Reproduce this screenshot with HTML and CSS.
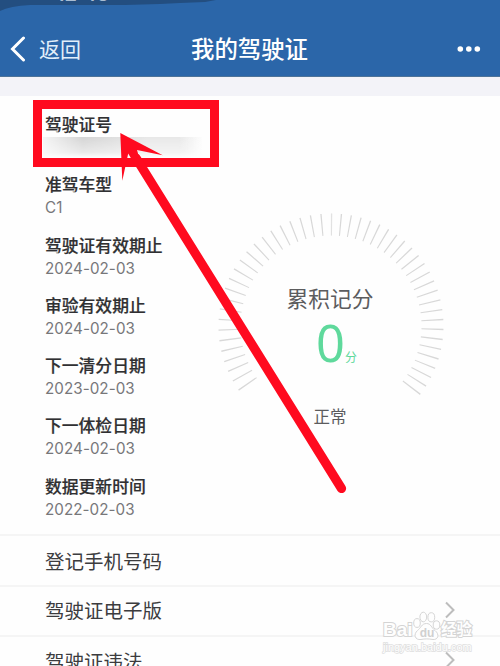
FILE: index.html
```html
<!DOCTYPE html>
<html lang="zh-CN">

<head>
  <meta charset="UTF-8">
  <title>我的驾驶证</title>
  <link rel="stylesheet" href="styles.css">
</head>

<body>
  <header class="header">
    <svg class="status-shade" width="500" height="14" viewBox="0 0 500 14">
      <path d="M0 0H216L205 2L180 3L160 4L125 5L30 5Q10 6 0 11Z" />
    </svg>
    <div class="status"><span class="clock">12:48</span></div>
    <div class="navbar">
      <a class="back">
        <svg width="16" height="26" viewBox="0 0 16 26">
          <path d="M13.5 2L2.5 13L13.5 24" />
        </svg>
        <span>返回</span>
      </a>
      <h1>我的驾驶证</h1>
      <svg class="more" width="24" height="8" viewBox="0 0 24 8">
        <circle cx="3.3" cy="4" r="2.8" />
        <circle cx="11.8" cy="4" r="2.8" />
        <circle cx="20.3" cy="4" r="2.8" />
      </svg>
    </div>
  </header>

  <main>
    <section class="card">
      <dl class="info">
        <div class="item">
          <dt>驾驶证号</dt>
          <dd class="hidden-value"></dd>
        </div>
        <div class="item">
          <dt>准驾车型</dt>
          <dd>C1</dd>
        </div>
        <div class="item">
          <dt>驾驶证有效期止</dt>
          <dd>2024-02-03</dd>
        </div>
        <div class="item">
          <dt>审验有效期止</dt>
          <dd>2024-02-03</dd>
        </div>
        <div class="item">
          <dt>下一清分日期</dt>
          <dd>2023-02-03</dd>
        </div>
        <div class="item">
          <dt>下一体检日期</dt>
          <dd>2024-02-03</dd>
        </div>
        <div class="item">
          <dt>数据更新时间</dt>
          <dd>2022-02-03</dd>
        </div>
      </dl>

      <div class="gauge">
        <svg class="ticks" width="228" height="228" viewBox="-114 -114 228 228">
          <path class="left" d="M0.5 -101.5A101.5 101.5 0 0 0 -80 62.5" />
          <path class="right" d="M0.5 -101.5A101.5 101.5 0 0 1 77.8 65.2" />
        </svg>
        <div class="score">
          <p class="score-title">累积记分</p>
          <p class="score-value">0<small>分</small></p>
          <p class="score-state">正常</p>
        </div>
      </div>
    </section>

    <ul class="menu">
      <li>登记手机号码</li>
      <li>驾驶证电子版
        <svg width="12" height="18" viewBox="0 0 12 18"><path d="M2 1.5L9.5 9L2 16.5" /></svg>
      </li>
      <li>驾驶证违法
        <svg width="12" height="18" viewBox="0 0 12 18"><path d="M2 1.5L9.5 9L2 16.5" /></svg>
      </li>
    </ul>
  </main>

  <!-- 红框和箭头 -->
  <div class="mark"></div>
  <svg class="arrow" width="500" height="666" viewBox="0 0 500 666">
    <path class="shaft" d="M136 158L341.5 488.5" />
    <path class="head" d="M120.3 133L162.7 155.3L137 150L139 157L132 160L128.2 153.5L122.3 180.7Z" />
  </svg>

  <div class="watermark">
    <div class="brand">
      <span class="bai">Bai</span>
      <svg width="28" height="30" viewBox="0 0 28 30">
        <ellipse cx="4" cy="12" rx="3.3" ry="4.4" />
        <ellipse cx="10.3" cy="6" rx="3.4" ry="4.8" />
        <ellipse cx="18.3" cy="6.3" rx="3.4" ry="4.6" />
        <ellipse cx="23.5" cy="14" rx="3.3" ry="4.2" />
        <path d="M13.5 12.5C18 12.5 18.5 17 22 19.5C27 23.5 25 29 20 28.5C15 27.7 12 27.7 8 28.5C2 29.3 0 23.5 4.5 19.5C8 17 8.5 12.5 13.5 12.5Z" />
        <text x="14" y="26" text-anchor="middle">du</text>
      </svg>
      <span class="jingyan">经验</span>
    </div>
    <div class="site">jingyan.baidu.com</div>
  </div>
</body>

</html>
```

FILE: styles.css
```css
* {
  box-sizing: border-box;
}

body {
  margin: 0;
  height: 666px;
  position: relative;
  overflow: hidden;
  background-color: #fefefe;
  font-family: Inter, "Noto Sans CJK SC", sans-serif;
  color: #3c3c3e;
}

h1, p, dl, dd, ul {
  margin: 0;
  padding: 0;
}

.header {
  position: relative;
  height: 77px;
  background-color: #2b66a9;
  border-bottom: 1px solid #4d7399;
}

.status-shade {
  position: absolute;
  top: 0;
  left: 0;
  fill: #234e80;
}

.status {
  position: relative;
  height: 21px;
  padding-left: 56px;
}

.clock {
  display: flex;
  align-items: flex-end;
  height: 0;
  font-size: 20px;
  font-weight: 600;
  line-height: 12px;
  color: #a9bdd3;
}

.navbar {
  display: grid;
  grid-template-columns: 1fr auto 1fr;
  align-items: center;
  height: 56px;
  padding: 0 19px 0 10px;
  color: #fff;
}

.back {
  display: flex;
  align-items: center;
  gap: 13px;
  font-size: 21px;
  line-height: 28px;
  color: #e2effa;
}

.back span {
  padding-top: 1px;
}

.back path {
  fill: none;
  stroke: #fff;
  stroke-width: 3;
  stroke-linecap: round;
}

h1 {
  padding: 1px 0 0 8px;
  font-size: 23.4px;
  font-weight: 500;
  line-height: 32px;
}

.more {
  justify-self: end;
  fill: #fff;
}

main {
  padding-top: 19px;
  background: linear-gradient(#f3f3f8 19px, #fefefe 19px);
}

.card {
  display: flex;
  height: 438px;
  padding: 17px 57px 0 45px;
}

.info {
  width: 172px;
  flex: none;
}

.item {
  height: 60.3px;
}

dt {
  font-size: 16.8px;
  font-weight: 500;
  line-height: 24px;
  color: #303032;
  -webkit-text-stroke: 0.2px #303032;
}

dd {
  font-size: 15.2px;
  line-height: 21px;
  letter-spacing: 0.05px;
  color: #77777a;
}

.hidden-value {
  width: 160px;
  height: 21px;
  margin-left: -2px;
  background: linear-gradient(90deg, #f4f4f4, #d4d4d4 25%, #dedede 45%, #e8e8e8 65%, #e8e8e8 85%, #fefefe00);
  -webkit-mask-image: linear-gradient(#000, #0008 70%, transparent);
  mask-image: linear-gradient(#000, #0008 70%, transparent);
}

.gauge {
  display: grid;
  width: 228px;
  height: 228px;
  margin-top: 99px;
  flex: none;
}

.ticks,
.score {
  grid-area: 1 / 1;
}

.ticks path {
  fill: none;
  stroke: #d8d8d8;
  stroke-width: 22;
  stroke-dashoffset: 0.6;
}

.ticks .left {
  stroke-dasharray: 1.2 8.42;
}

.ticks .right {
  stroke-dasharray: 1.2 7.8;
}

.score {
  padding: 71px 2px 0 0;
  text-align: center;
  color: #5c5c5e;
}

.score-title {
  font-size: 21.7px;
  line-height: 32px;
}

.score-value {
  display: flex;
  justify-content: center;
  align-items: baseline;
  padding-left: 13px;
  font-family: "Noto Sans", "Noto Sans CJK SC", sans-serif;
  font-size: 50.5px;
  line-height: 56px;
  color: #5fd99c;
}

.score-value small {
  width: 12px;
  font-size: 12px;
}

.score-state {
  padding-top: 16px;
  font-size: 16.5px;
  line-height: 30px;
}

.menu {
  list-style: none;
}

.menu li {
  display: flex;
  justify-content: space-between;
  align-items: center;
  height: 50.5px;
  padding: 0 44px 2px 45px;
  border-top: 2px solid #f5f5f5;
  font-size: 19.5px;
}

.menu li:first-child {
  padding-bottom: 0;
}

.menu path {
  fill: none;
  stroke: #bdbdbd;
  stroke-width: 2;
}

.mark {
  position: absolute;
  left: 33px;
  top: 100px;
  width: 186px;
  height: 67px;
  border: 9px solid #ff0a1f;
}

.arrow {
  position: absolute;
  left: 0;
  top: 0;
}

.shaft {
  stroke: #ff0a1f;
  stroke-width: 9.2;
  stroke-linecap: round;
}

.head {
  fill: #ff0a1f;
}

.watermark {
  position: absolute;
  left: 383px;
  top: 611px;
  width: 90px;
  font-family: "Liberation Sans", "Noto Sans CJK SC", sans-serif;
  color: #fefefe;
}

.brand {
  display: flex;
  align-items: flex-end;
  height: 30px;
}

.bai,
.jingyan {
  font-weight: bold;
  -webkit-text-stroke: 2px #d4d4d4;
  paint-order: stroke fill;
}

.bai {
  width: 30px;
  font-size: 19px;
  line-height: 22px;
}

.jingyan {
  font-size: 15.5px;
  line-height: 22px;
}

.brand svg {
  flex: none;
}

.brand ellipse,
.brand path {
  fill: #fefefe;
  stroke: #d6d6d6;
}

.brand text {
  font-size: 12px;
  font-weight: bold;
  fill: #d0d0d0;
}

.site {
  font-size: 11px;
  line-height: 13px;
  -webkit-text-stroke: 1.5px #dedede;
  paint-order: stroke fill;
}
```
